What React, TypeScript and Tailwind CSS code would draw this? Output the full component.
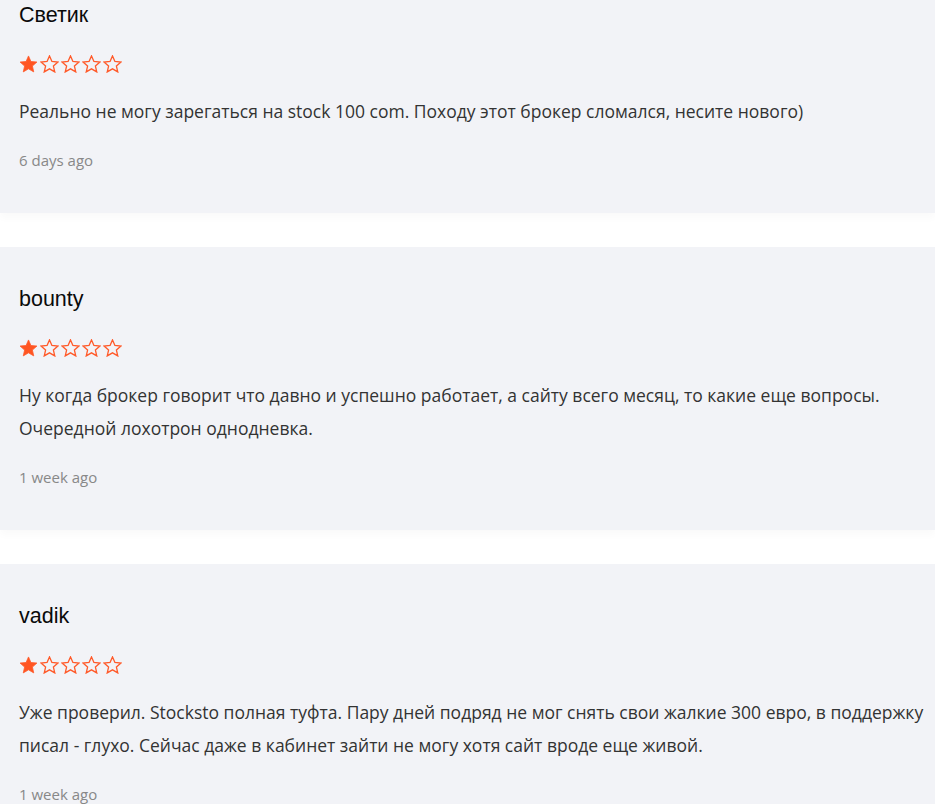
import React from "react";

type Review = { name: string; text: string; date: string };

const reviews: Review[] = [
  {
    name: "Светик",
    text: "Реально не могу зарегаться на stock 100 com. Походу этот брокер сломался, несите нового)",
    date: "6 days ago",
  },
  {
    name: "bounty",
    text: "Ну когда брокер говорит что давно и успешно работает, а сайту всего месяц, то какие еще вопросы. Очередной лохотрон однодневка.",
    date: "1 week ago",
  },
  {
    name: "vadik",
    text: "Уже проверил. Stocksto полная туфта. Пару дней подряд не мог снять свои жалкие 300 евро, в поддержку писал - глухо. Сейчас даже в кабинет зайти не могу хотя сайт вроде еще живой.",
    date: "1 week ago",
  },
];

function Star({ filled }: { filled: boolean }) {
  return (
    <svg width="19" height="18" viewBox="0 0 24 23" className="block">
      <polygon
        points="12,1.2 15.1,8.3 22.8,9 17,14.1 18.7,21.6 12,17.7 5.3,21.6 7,14.1 1.2,9 8.9,8.3"
        fill={filled ? "#ff5522" : "none"}
        stroke="#ff5a2a"
        strokeWidth={filled ? 1 : 1.7}
        strokeLinejoin="miter"
      />
    </svg>
  );
}

function Card({ r, first }: { r: Review; first?: boolean }) {
  return (
    <div
      className={`bg-[#f2f3f7] shadow-[0_5px_8px_rgba(0,0,0,0.025)] pl-[19px] pr-[6px] pt-[40px] pb-[43px] ${
        first ? "mt-[-37px]" : ""
      }`}
    >
      <div
        className="text-[21.5px] leading-[24px] text-[#0a0a0a]"
        style={{ fontFamily: '"Liberation Sans", Arial, sans-serif' }}
      >
        {r.name}
      </div>
      <div className="flex gap-[2px] mt-[28px]">
        <Star filled />
        <Star filled={false} />
        <Star filled={false} />
        <Star filled={false} />
        <Star filled={false} />
      </div>
      <p
        className="mt-[22px] text-[17.5px] leading-[33px] text-[#333]"
        style={{ fontFamily: '"Open Sans", sans-serif' }}
      >
        {r.text}
      </p>
      <div
        className="mt-[22px] text-[15px] leading-[20px] text-[#888]"
        style={{ fontFamily: '"Open Sans", sans-serif' }}
      >
        {r.date}
      </div>
    </div>
  );
}

export default function App() {
  return (
    <div className="w-[935px] h-[804px] overflow-hidden bg-white">
      <div className="flex flex-col gap-[34px]">
        {reviews.map((r, i) => (
          <Card key={i} r={r} first={i === 0} />
        ))}
      </div>
    </div>
  );
}
